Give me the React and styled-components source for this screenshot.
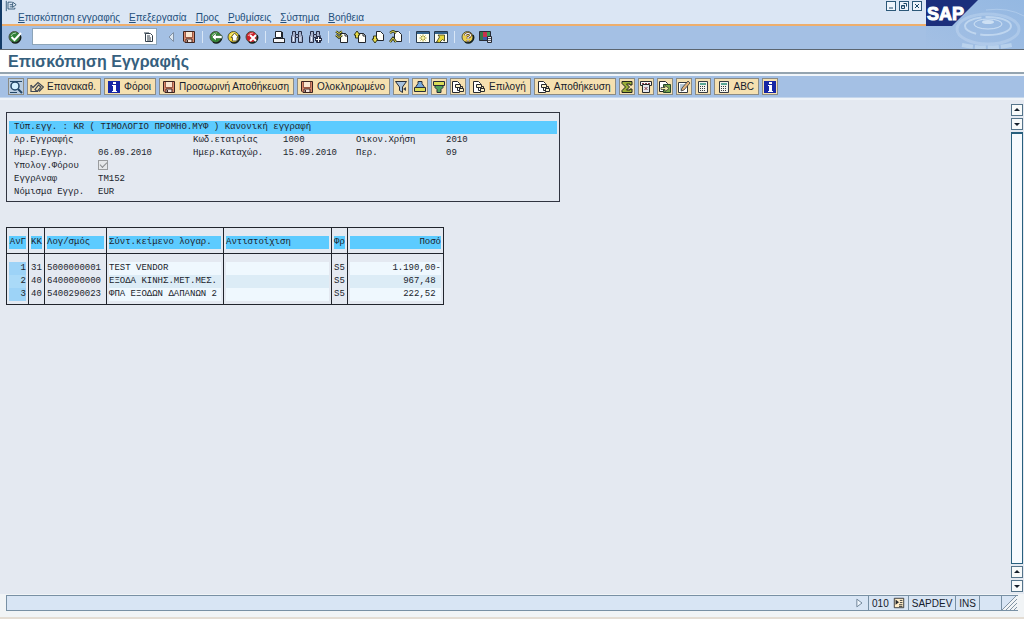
import React from 'react';
import styled, { createGlobalStyle, css } from 'styled-components';

const GlobalStyle = createGlobalStyle`
  * {
    box-sizing: border-box;
  }

  body {
    margin: 0;
    color: #16202c;
    font-family: 'Liberation Sans', Arial, sans-serif;
    font-size: 10px;
    background: #e4e9f1;
  }

  button, input {
    font: inherit;
    color: inherit;
  }
`;

const StyledPage = styled.div`
  min-height: 100vh;
  display: flex;
  flex-direction: column;
`;

const StyledHeader = styled.header`
  display: grid;
  grid-template-columns: 1fr 98px;
  height: 50px;
  border-bottom: 1px solid #5c6670;
`;

const StyledHeaderMain = styled.div`
  border-left: 2px solid #123a66;
  display: flex;
  flex-direction: column;
  background: #a4c0e4;
`;

const StyledMenuBar = styled.div`
  display: flex;
  justify-content: space-between;
  height: 26px;
  padding: 0 4px 0 3px;
  background: #dbe6f4;
  border-bottom: 2px solid #eeae6c;
`;

const StyledMenu = styled.nav`
  display: flex;
  gap: 9px;
  padding-left: 13px;
`;

const StyledMenuLink = styled.a`
  color: #24507c;
  font-size: 10px;
  line-height: 12px;
  text-decoration: none;
  white-space: nowrap;
`;

const StyledWindowButtons = styled.div`
  display: flex;
  gap: 3px;
  padding-top: 1px;
`;

const StyledWindowButton = styled.button`
  width: 10px;
  height: 10px;
  padding: 0;
  display: flex;
  background: #eef4fb;
  border: 1px solid #2c5878;
`;

const StyledToolbar = styled.div`
  flex: 1;
  display: flex;
  align-items: center;
  gap: 2px;
  padding: 0 0 2px 5px;
`;

const StyledIconButton = styled.button`
  width: 16px;
  height: 16px;
  padding: 1px;
  display: flex;
  flex-shrink: 0;
  background: none;
  border: 0;
`;

const StyledSeparator = styled.i`
  width: 1px;
  height: 12px;
  margin: 0 3px;
  background: #d8e6f6;
`;

const StyledCommand = styled.div`
  display: flex;
  align-items: center;
  width: 125px;
  height: 17px;
  margin: 0 4px 0 7px;
  background: #fff;
  border: 1px solid #8ca4b8;

  input {
    flex: 1;
    min-width: 0;
    height: 15px;
    padding: 0 3px;
    background: none;
    border: 0;
    outline: 0;
  }
`;

const StyledTitle = styled.h1`
  height: 24px;
  margin: 0;
  padding-left: 8px;
  color: #36607e;
  background: #fff;
  border-bottom: 2px solid #94a4b0;
  font-size: 16px;
  line-height: 23px;
`;

const StyledActions = styled.div`
  display: flex;
  align-items: center;
  gap: 3px;
  height: 24px;
  padding-left: 8px;
  background: #a4c0e4;
  border-top: 2px solid #f0f5fa;
  border-bottom: 1px solid #c4d6ec;
`;

const StyledAction = styled.button`
  display: flex;
  align-items: center;
  gap: 3px;
  height: 17px;
  padding: ${ ({ $labelled }) => $labelled ? '0 4px 0 2px' : '0' };
  background: ${ ({ $plain }) => $plain ? '#b8cce0' : '#f5e0b0' };
  border: 1px solid #8b8b84;
  white-space: nowrap;
`;

const StyledWorkspace = styled.main`
  flex: 1;
  display: flex;
  justify-content: space-between;
  padding: 4px 1px 2px 6px;
  border-top: 2px solid #eef3f8;
`;

const StyledReport = styled.div`
  padding-top: 8px;
  color: #20242c;
  font-family: 'Liberation Mono', 'Courier New', monospace;
  font-size: 9px;
  line-height: 13px;
  white-space: pre;
`;

const StyledDocument = styled.section`
  width: 554px;
  max-width: 100%;
  height: 90px;
  padding: 8px 2px 0;
  border: 1px solid #303440;
`;

const StyledDocumentType = styled.h2`
  margin: 0;
  padding-left: 5px;
  background: #5ccbff;
  font-size: 9px;
  font-weight: normal;
  line-height: 13px;
`;

const StyledFields = styled.div`
  display: grid;
  grid-template-columns: 84px 95px 90px 73px 90px 1fr;
  grid-auto-rows: 13px;
  padding-left: 5px;
`;

const StyledCheckbox = styled.input`
  appearance: none;
  width: 10px;
  height: 10px;
  margin: 0;
  display: block;
  border: 1px solid #9a9c9e;
  background: #e6e8ea;

  &:checked::after {
    content: '';
    display: block;
    width: 6px;
    height: 3px;
    margin: 1px;
    border: solid #8c8e90;
    border-width: 0 0 1px 1px;
    transform: rotate(-45deg);
  }
`;

const StyledTable = styled.table`
  width: 437px;
  margin-top: 25px;
  table-layout: fixed;
  border-collapse: separate;
  border-spacing: 0;
  border: solid #20242c;
  border-width: 1px 1px 1px 0;
`;

const cell = css`
  padding: 0 2px;
  border-left: 1px solid #20242c;
  font-weight: normal;
  text-align: ${ ({ $right }) => $right ? 'right' : 'left' };

  span {
    display: block;
    height: 13px;
  }
`;

const StyledHeadCell = styled.th`
  ${ cell }
  height: 26px;
  padding-top: 4px;
  border-bottom: 1px solid #20242c;

  span {
    background: #5ccbff;
  }
`;

const rowColors = {
  index: [ '#9dd3f7', '#aadaf8' ],
  filled: [ '#eff8fe', '#dcecf6' ],
};

const StyledCell = styled.td`
  ${ cell }
  height: 13px;

  span {
    background: ${ ({ $tone, $odd }) => $tone && rowColors[$tone][$odd ? 1 : 0] };
  }
`;

const StyledSpacerCell = styled.td`
  height: ${ ({ $height }) => $height }px;
  padding: 0;
  border-left: 1px solid #20242c;
`;

const StyledScrollbar = styled.div`
  display: flex;
  flex-direction: column;
  gap: 2px;
  width: 12px;
`;

const StyledScrollButton = styled.button`
  width: 12px;
  height: 12px;
  padding: 0;
  display: flex;
  background: #f8fafa;
  border: 1px solid #55748a;
`;

const StyledTrack = styled.div`
  flex: 1;
  background: #f6fafe;
  border: 1px solid #28607e;
  border-top-width: 2px;
`;

const StyledFooter = styled.footer`
  height: 25px;
  padding: 1px 6px 0;
  background: #f1f4f6;
  border-bottom: 2px solid #e4ddd4;
`;

const StyledStatus = styled.div`
  display: flex;
  height: 16px;
  background: #d8e5f4;
  border: 1px solid #7890a4;
  border-right: 0;
`;

const StyledStatusItem = styled.div`
  display: flex;
  align-items: center;
  justify-content: ${ ({ $grow }) => $grow ? 'flex-end' : 'flex-start' };
  flex-grow: ${ ({ $grow }) => $grow ? 1 : 0 };
  gap: 4px;
  padding: 0 3px;
  min-width: 22px;
  border-right: 1px solid #7890a4;
`;

const StyledGrip = styled.svg`
  width: 16px;
  height: 14px;
  background: #f1f4f6;
`;

const StyledSvg = styled.svg`
  display: block;
  width: ${ ({ $size }) => $size }px;
  height: ${ ({ $size }) => $size }px;
  flex-shrink: 0;
`;

const disc = fill => (
  <>
    <circle cx='6.5' cy='7' r='5.500' fill={ fill } stroke='#4a5248'/>
    <path d='M12 5a5.500 5.500 0 0 1-8 7' stroke='#15201a' strokeWidth='1.500' fill='none'/>
    <path d='M3 6Q4 3 8 3' stroke='#fff' strokeOpacity='.6' fill='none'/>
  </>
);

const floppy = (
  <>
    <path d='M1.500 1.500h11v11H3l-1.500-1.500z' fill='#dc8a6c' stroke='#3c2420'/>
    <path d='M4 2h6v5H4z' fill='#fae6d0'/>
    <path d='M3.500 2v5.500h7V2' fill='none' stroke='#7c4434' strokeWidth='.7'/>
    <path d='M4 9h6v3H4z' fill='#f4e4dc'/>
    <path d='M4 12V9h6v3M5.500 10v2' stroke='#3c2420' fill='none'/>
  </>
);

const binoculars = (
  <>
    <path
      d='M2.500 1.500h3v3h3v-3h3v3l1 2v6h-4v-5h-3v5h-4v-6l1-2z'
      fill='#a8b2cc' stroke='#262c44'
    />
    <path d='M3.500 7v4M10 7v4' stroke='#eef2fa'/>
    <path d='M5.500 5v2M8.500 5v2' stroke='#262c44'/>
  </>
);

const page = (
  <>
    <path d='M5.500 3.500h5l2 2v7h-7z' fill='#fffef8' stroke='#20242c'/>
    <path d='M10 3v3h3' fill='none' stroke='#20242c'/>
  </>
);

const layers = (
  <>
    <path d='M1.500 1.500h5l2 2v9h-7z' fill='#fff' stroke='#26282c'/>
    <path d='M4.500 4.500h5v3h-5zM8.500 8.500h4v3h-4z' fill='#fbf3cc' stroke='#26282c'/>
    <path d='M6.500 8v2.500h2M10 6.500h1.500v2' stroke='#26282c' fill='none'/>
  </>
);

const info = (
  <>
    <path d='M1 1h12v12H1z' fill='#1626a4'/>
    <path d='M6 2h3v2H6zM5 5h4v6h1v1H5v-1h1V6H5z' fill='#fff'/>
  </>
);

const calculator = (
  <>
    <path d='M2.500 1.500h9v11h-9z' fill='#f4f4ec' stroke='#363a40'/>
    <path d='M4 3h6v2H4z' fill='#5aa694'/>
    <path d='M4 6.500h6M4 8.500h6M4 10.500h6' stroke='#363a40' strokeDasharray='1 1'/>
  </>
);

const windowFrame = (
  <>
    <path d='M.5 1.500h13v11H.5z' fill='#fffef0' stroke='#26384c'/>
    <path d='M1 3h12' stroke='#35638c' strokeWidth='2'/>
  </>
);

const shapes = {
  check: <>{ disc('#308238') }<path d='M3.500 7l3 3L13 3' stroke='#fff' strokeWidth='2' fill='none'/></>,
  list: <><path d='M3.500 3.500h5l2 2v6h-7z' fill='#fff' stroke='#33404c'/><path d='M2 3h5M5 6h3M5 8h4M5 10h4' stroke='#33404c'/></>,
  previous: <path d='M9.500 2.500v9L5 7z' fill='#dce6f0' stroke='#8090a4'/>,
  save: floppy,
  back: <>{ disc('#328a34') }<path d='M3 7l4-4v2.500h6v3H7V11z' fill='#fff' stroke='#1c4c20' strokeWidth='.5'/></>,
  exit: <>{ disc('#eed22c') }<path d='M7.500 3l4 4.500H10V11H5.500V7.500H4z' fill='#fff' stroke='#4c4420' strokeWidth='.8'/></>,
  cancel: <>{ disc('#cc2028') }<path d='M5 5l6 6m0-6l-6 6' stroke='#fff' strokeWidth='2'/></>,
  print: <><path d='M3.500 1.500h6v6h-6z' fill='#fff' stroke='#20242c'/><path d='M10.500 2v6' stroke='#20242c'/><path d='M1.500 8.500h11v4h-11z' fill='#f4f4f6' stroke='#20242c'/><path d='M2 12.500h11' stroke='#20242c'/></>,
  find: binoculars,
  findNext: <>{ binoculars }<path d='M10.500 6v7M7 9.500h7' stroke='#262c44' strokeWidth='3'/><path d='M10.500 7v5M8 9.500h5' stroke='#fff'/></>,
  firstPage: <>{ page }<path d='M1 1.500l3 2 3-2M1 5l3 2.500L7 5' stroke='#34381c' strokeWidth='2.500' fill='none'/><path d='M1 1.500l3 2 3-2M1 5l3 2.500L7 5' stroke='#dfd850' fill='none'/></>,
  pageUp: <>{ page }<path d='M1 5l3-4 3 4H5.500v3h-3V5z' fill='#e9dc48' stroke='#34381c'/></>,
  pageDown: <><path d='M5.500 1.500h4l3 3v6h-7z' fill='#fffef8' stroke='#20242c'/><path d='M1 9l3 4 3-4H5.500V6h-3v3z' fill='#e9dc48' stroke='#34381c'/></>,
  lastPage: <><path d='M5.500 1.500h4l3 3v7h-7z' fill='#fffef8' stroke='#20242c'/><path d='M1 3l3-2 3 2M1 12l3-4 3 4' stroke='#34381c' strokeWidth='2.500' fill='none'/><path d='M1 3l3-2 3 2M1 12l3-4 3 4' stroke='#dfd850' fill='none'/></>,
  session: <>{ windowFrame }<path d='M7 4.500v7M3.500 8h7M4.500 5.500l5 5m0-5l-5 5' stroke='#a39b28'/><path d='M6 7h2v2H6z' fill='#fff8a0'/></>,
  shortcut: <>{ windowFrame }<path d='M2.500 12l3-5-1.500-2h6.500v6L8.500 9.500l-3 3z' fill='#e8d83a' stroke='#34381c' strokeWidth='.8'/></>,
  help: <>{ disc('#ecd050') }<path d='M4.500 5.500q0-2 2.500-2t2.500 2Q9.500 6.500 7 7.500V9M7 10v2' stroke='#4c3420' strokeWidth='2.500' fill='none'/><path d='M4.500 5.500q0-2 2.500-2t2.500 2Q9.500 6.500 7 7.500V9M7 10v1.500' stroke='#fff' strokeWidth='1.200' fill='none'/></>,
  layout: <><path d='M.5 1.500h11v9H.5z' fill='#3d9b55' stroke='#262a34'/><path d='M4 2h4v5H4z' fill='#c7304e'/><path d='M1 2h3v8H1z' fill='#35774a'/><path d='M4 7h4v3H4z' fill='#3d59a8'/><path d='M8.500 6.500h4v6h-4z' fill='#e7e7ee' stroke='#262a34'/><path d='M9 8.500h3M9 10.500h3' stroke='#5c606c'/></>,
  details: <><circle cx='6' cy='6' r='4' fill='#d4f0ff' stroke='#234768' strokeWidth='1.500'/><path d='M9 9l4 4' stroke='#234768' strokeWidth='2'/><path d='M1 1.500h12M1 12.500h7' stroke='#234768'/></>,
  undo: <><path d='M1 5v6.500h6L5 9.500 8.500 5 11 7l-3.500 4' fill='none' stroke='#3e4652' strokeWidth='1.200'/><path d='M1 5l2 2.500L8 2.500 13.500 7 9 11.500' fill='none' stroke='#3e4652' strokeWidth='1.200'/></>,
  info,
  filter: <><path d='M1.500 1.500h11L8.500 7v5.500l-3-2V7z' fill='#a6c1dd' stroke='#262c38'/><path d='M9 9l3-2v4z' fill='#39424c'/></>,
  ascending: <><path d='M5 1.500h4v2l2 3v1H3v-1l2-3z' fill='#76aadd' stroke='#262c38'/><path d='M1.500 7.500h11v4h-11z' fill='#d9dc58' stroke='#262c38'/></>,
  descending: <><path d='M1.500 1.500h11v4h-11z' fill='#d9dc58' stroke='#262c38'/><path d='M3 5.500h8v2l-2 2v3H5v-3l-2-2z' fill='#50a05c' stroke='#262c38'/></>,
  layers,
  sum: <path d='M2 1.500h10v3.500h-2V4H6.500l3 3-3 3H10V9h2v3.500H2v-2L5.500 7 2 3.500z' fill='#9cae38' stroke='#20241c'/>,
  display: <><path d='M1.500 1.500h11v4h-11z' fill='#f6f6f6' stroke='#26282c'/><path d='M3.500 4.500h7v8h-7z' fill='#e4e6ec' stroke='#26282c'/><path d='M3 3.500h2m1 0h2m1 0h2M5.500 7l3 3m0-3l-3 3' stroke='#8a3c48'/></>,
  export: <><path d='M1.500 1.500h6l2 2v8h-8z' fill='#fff' stroke='#26282c'/><path d='M5.500 4.500h7v8h-7z' fill='#78a84c' stroke='#26482c'/><path d='M3 7.500h4v-2l4 3-4 3v-2H3z' fill='#f5efaa' stroke='#26282c' strokeWidth='.7'/></>,
  edit: <><path d='M1.500 2.500h9v10h-9z' fill='#fff' stroke='#34383c'/><path d='M3 5h5M3 7h4M3 9h2' stroke='#7090ac'/><path d='M4 11l1-3 6-7 2 2-6 7z' fill='#e3b27c' stroke='#34383c' strokeWidth='.8'/></>,
  calculator,
  menu: <><path d='M8 2.500H3.500v8h8V9' fill='none' stroke='#244c6c'/><path d='M1.500 1v12M5.500 5.500h4M5.500 8h4' stroke='#244c6c'/><path d='M9 2.500l4 3-4 3z' fill='#eff6fd' stroke='#244c6c'/></>,
  next: <path d='M4.500 2.500v9L10.500 7z' fill='#eff6fd' stroke='#62788c'/>,
  system: <><path d='M1.500 1.500h11v11h-11z' fill='#ffedc8' stroke='#26282c'/><path d='M3 3l4 3-4 3z' fill='#26282c'/><path d='M8 4h3M8 6.500h3M7 9h4M7 11h4' stroke='#26282c'/></>,
};

const Icon = ({ name, size = 14 }) => (
  <StyledSvg $size={ size } viewBox='0 0 14 14' aria-hidden='true'>{ shapes[name] }</StyledSvg>
);

const Logo = () => (
  <svg width='98' height='49' viewBox='0 0 98 49' role='img' aria-label='SAP'>
    <defs>
      <linearGradient id='water' x1='0' x2='1' y1='1' y2='0'>
        <stop offset='0' stopColor='#a4c0e4'/>
        <stop offset='1' stopColor='#94b8e2'/>
      </linearGradient>
    </defs>
    <path d='M0 0h98v49H0z' fill='url(#water)'/>
    <g fill='none' stroke='#e2effb'>
      <ellipse cx='62' cy='22' rx='5' ry='1' strokeWidth='2' strokeOpacity='.7'/>
      <ellipse cx='62' cy='24' rx='14' ry='5' strokeOpacity='.7'/>
      <ellipse cx='62' cy='26' rx='23' ry='9' strokeWidth='2' strokeOpacity='.5' strokeDasharray='34 4'/>
      <ellipse cx='62' cy='29' rx='31' ry='15' strokeWidth='3' strokeOpacity='.25'/>
      <path d='M36 45q26 5 50 0' strokeWidth='4' strokeOpacity='.4' strokeDasharray='11 2'/>
      <path d='M60 10q22-3 38 6' strokeOpacity='.3'/>
    </g>
    <path d='M0 0h52L26 26H0z' fill='#1c2f7c'/>
    <text
      x='1' y='20' fill='#fff' stroke='#fff' strokeWidth='1'
      fontFamily='Liberation Sans' fontSize='18' fontWeight='bold'
    >SAP</text>
  </svg>
);

const menuItems = [ 'Επισκόπηση εγγραφής', 'Επεξεργασία', 'Προς', 'Ρυθμίσεις', 'Σύστημα', 'Βοήθεια' ];

const toolGroups = [
  [ 'previous', 'save' ],
  [ 'back', 'exit', 'cancel' ],
  [ 'print', 'find', 'findNext' ],
  [ 'firstPage', 'pageUp', 'pageDown', 'lastPage' ],
  [ 'session', 'shortcut' ],
  [ 'help', 'layout' ],
];

const actions = [
  { icon: 'details', plain: true },
  { icon: 'undo', label: 'Επανακαθ.' },
  { icon: 'info', label: 'Φόροι' },
  { icon: 'save', label: 'Προσωρινή Αποθήκευση' },
  { icon: 'save', label: 'Ολοκληρωμένο' },
  { icon: 'filter' },
  { icon: 'ascending' },
  { icon: 'descending' },
  { icon: 'layers' },
  { icon: 'layers', label: 'Επιλογή' },
  { icon: 'layers', label: 'Αποθήκευση' },
  { icon: 'sum' },
  { icon: 'display' },
  { icon: 'export' },
  { icon: 'edit' },
  { icon: 'calculator' },
  { icon: 'calculator', label: 'ABC' },
  { icon: 'info' },
];

const columns = [
  { title: 'ΑνΓ', width: 22, right: true, tone: 'index' },
  { title: 'ΚΚ', width: 16 },
  { title: 'Λογ/σμός', width: 62 },
  { title: 'Σύντ.κείμενο λογαρ.', width: 117, tone: 'filled' },
  { title: 'Αντιστοίχιση', width: 108, tone: 'filled' },
  { title: 'Φρ', width: 16 },
  { title: 'Ποσό', width: 96, right: true, tone: 'filled' },
];

const rows = [
  [ '1', '31', '5000000001', 'TEST VENDOR', '', 'S5', '1.190,00-' ],
  [ '2', '40', '6400000000', 'ΕΞΟΔΑ ΚΙΝΗΣ.ΜΕΤ.ΜΕΣ.', '', 'S5', '967,48 ' ],
  [ '3', '40', '5400290023', 'ΦΠΑ ΕΞΟΔΩΝ ΔΑΠΑΝΩΝ 2', '', 'S5', '222,52 ' ],
];

const SpacerRow = ({ height }) => (
  <tr>
    { columns.map(({ title }) => <StyledSpacerCell key={ title } $height={ height }/>) }
  </tr>
);

const DocumentInfo = () => (
  <StyledDocument>
    <StyledDocumentType>Τύπ.εγγ. : KR ( ΤΙΜΟΛΟΓΙΟ ΠΡΟΜΗΘ.ΜΥΦ ) Κανονική εγγραφή</StyledDocumentType>
    <StyledFields>
      <span>Αρ.Εγγραφής</span><span/>
      <span>Κωδ.εταιρίας</span><span>1000</span>
      <span>Οικον.Χρήση</span><span>2010</span>
      <span>Ημερ.Εγγρ.</span><span>06.09.2010</span>
      <span>Ημερ.Καταχώρ.</span><span>15.09.2010</span>
      <span>Περ.</span><span>09</span>
      <label htmlFor='tax'>Υπολογ.Φόρου</label>
      <StyledCheckbox id='tax' type='checkbox' defaultChecked disabled/>
      <span/><span/><span/><span/>
      <span>ΕγγρΑναφ</span><span>TM152</span>
      <span/><span/><span/><span/>
      <span>Νόμισμα Εγγρ.</span><span>EUR</span>
    </StyledFields>
  </StyledDocument>
);

const LineItems = () => (
  <StyledTable>
    <colgroup>
      { columns.map(({ title, width }) => <col key={ title } width={ width }/>) }
    </colgroup>
    <thead>
      <tr>
        { columns.map(({ title, right }) => (
          <StyledHeadCell key={ title } $right={ right }><span>{ title }</span></StyledHeadCell>
        )) }
      </tr>
    </thead>
    <tbody>
      <SpacerRow height={ 8 }/>
      { rows.map((row, index) => (
        <tr key={ row[0] }>
          { row.map((value, column) => (
            <StyledCell
              key={ columns[column].title }
              $right={ columns[column].right }
              $tone={ columns[column].tone }
              $odd={ index % 2 === 1 }
            ><span>{ value }</span></StyledCell>
          )) }
        </tr>
      )) }
      <SpacerRow height={ 3 }/>
    </tbody>
  </StyledTable>
);

const ScrollArrow = ({ down }) => (
  <StyledScrollButton aria-label={ down ? 'down' : 'up' }>
    <svg width='10' height='10' viewBox='0 0 10 10'>
      <path d={ down ? 'M2 4h6L5 7z' : 'M2 6h6L5 3z' } fill='#16202c'/>
    </svg>
  </StyledScrollButton>
);

const windowShapes = {
  minimize: 'M2 6h4',
  restore: 'M3.500 1.500h3v3M1.500 3.500h3v3h-3zM2 4h3',
  close: 'M2 2l4 4m0-4l-4 4',
};

const App = () => (
  <StyledPage>
    <GlobalStyle/>
    <StyledHeader>
      <StyledHeaderMain>
        <StyledMenuBar>
          <div>
            <Icon name='menu' size={ 12 }/>
            <StyledMenu>
              { menuItems.map(item => (
                <StyledMenuLink key={ item } href='#'><u>{ item[0] }</u>{ item.slice(1) }</StyledMenuLink>
              )) }
            </StyledMenu>
          </div>
          <StyledWindowButtons>
            { Object.keys(windowShapes).map(name => (
              <StyledWindowButton key={ name } aria-label={ name }>
                <svg width='8' height='8' viewBox='0 0 8 8'>
                  <path d={ windowShapes[name] } fill='none' stroke='#1c4868'/>
                </svg>
              </StyledWindowButton>
            )) }
          </StyledWindowButtons>
        </StyledMenuBar>
        <StyledToolbar>
          <StyledIconButton aria-label='enter'><Icon name='check'/></StyledIconButton>
          <StyledCommand>
            <input aria-label='command'/>
            <Icon name='list'/>
          </StyledCommand>
          { toolGroups.map((group, index) => (
            <React.Fragment key={ group[0] }>
              { index > 0 && <StyledSeparator/> }
              { group.map(name => (
                <StyledIconButton key={ name } aria-label={ name }><Icon name={ name }/></StyledIconButton>
              )) }
            </React.Fragment>
          )) }
        </StyledToolbar>
      </StyledHeaderMain>
      <Logo/>
    </StyledHeader>
    <StyledTitle>Επισκόπηση Εγγραφής</StyledTitle>
    <StyledActions>
      { actions.map(({ icon, label, plain }, index) => (
        <StyledAction key={ index } $labelled={ !!label } $plain={ plain } aria-label={ label || icon }>
          <Icon name={ icon }/>
          { label }
        </StyledAction>
      )) }
    </StyledActions>
    <StyledWorkspace>
      <StyledReport>
        <DocumentInfo/>
        <LineItems/>
      </StyledReport>
      <StyledScrollbar>
        <ScrollArrow/>
        <ScrollArrow down/>
        <StyledTrack/>
        <ScrollArrow/>
        <ScrollArrow down/>
      </StyledScrollbar>
    </StyledWorkspace>
    <StyledFooter>
      <StyledStatus>
        <StyledStatusItem $grow><Icon name='next' size={ 12 }/></StyledStatusItem>
        <StyledStatusItem>010 <Icon name='system' size={ 12 }/></StyledStatusItem>
        <StyledStatusItem>SAPDEV</StyledStatusItem>
        <StyledStatusItem>INS</StyledStatusItem>
        <StyledStatusItem/>
        <StyledGrip viewBox='0 0 16 14'>
          <path d='M0 0h14L0 14z' fill='#d8e5f4'/>
          <path d='M0 14L14 0M4 14L15 3M8 14l7-7M12 14l3-3' stroke='#8294a4'/>
        </StyledGrip>
      </StyledStatus>
    </StyledFooter>
  </StyledPage>
);

export default App;
